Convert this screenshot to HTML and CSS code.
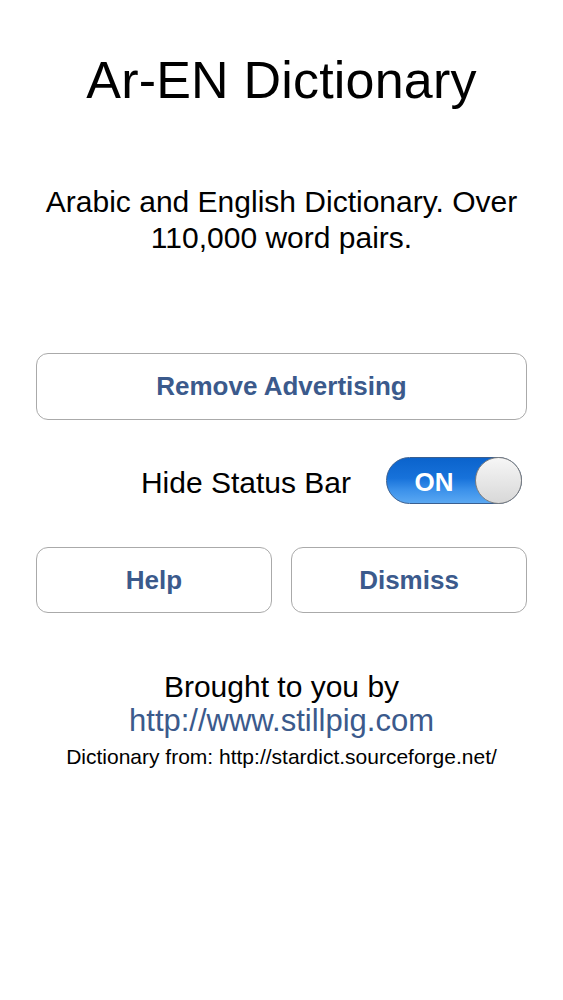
FILE: index.html
```html
<!DOCTYPE html>
<html lang="en">
<head>
<meta charset="utf-8">
<title>Ar-EN Dictionary</title>
<link rel="stylesheet" href="styles.css">
</head>
<body>
<div class="screen">
  <h1 class="title">Ar-EN Dictionary</h1>
  <p class="desc">Arabic and English Dictionary. Over 110,000 word pairs.</p>
  <button class="btn btn-wide" type="button">Remove Advertising</button>
  <div class="toggle-row">
    <span class="toggle-label">Hide Status Bar</span>
    <div class="switch">
      <span class="switch-text">ON</span>
      <span class="knob"></span>
    </div>
  </div>
  <div class="btn-pair">
    <button class="btn" type="button">Help</button>
    <button class="btn" type="button">Dismiss</button>
  </div>
  <div class="footer">
    <div class="brought">Brought to you by</div>
    <div class="link">http://www.stillpig.com</div>
    <div class="source">Dictionary from: http://stardict.sourceforge.net/</div>
  </div>
</div>
</body>
</html>
```

FILE: styles.css
```css
html, body {
  margin: 0;
  padding: 0;
  background: #ffffff;
}
body {
  font-family: "Liberation Sans", Arial, sans-serif;
  color: #000;
}
.screen {
  width: 563px;
  box-sizing: border-box;
  padding: 0 36px;
  display: flex;
  flex-direction: column;
}
.title {
  margin: 50px 0 0;
  font-size: 52px;
  font-weight: normal;
  line-height: 60px;
  text-align: center;
  letter-spacing: 0.2px;
}
.desc {
  margin: 74px 0 0;
  font-size: 30px;
  line-height: 36px;
  text-align: center;
}
.btn {
  font-family: "Liberation Sans", Arial, sans-serif;
  font-size: 26px;
  font-weight: bold;
  color: #3b5a8c;
  background: #fff;
  border: 1.5px solid #aaaaaa;
  border-radius: 12px;
  height: 66px;
  padding: 0;
  margin: 0;
}
.btn-wide {
  margin-top: 97px;
  height: 67px;
  width: 100%;
}
.toggle-row {
  margin-top: 37px;
  height: 47px;
  display: flex;
  align-items: center;
  justify-content: flex-end;
  gap: 35px;
  padding-right: 5px;
}
.toggle-label {
  font-size: 30px;
  padding-top: 4px;
}
.switch {
  position: relative;
  width: 136px;
  height: 47px;
  box-sizing: border-box;
  border-radius: 24px;
  border: 1px solid #3a5f90;
  background: linear-gradient(to bottom, #0b63cc 0%, #1772da 45%, #3a90ea 70%, #5aa8f2 100%);
  display: flex;
  align-items: center;
}
.switch-text {
  width: 94px;
  padding-top: 3px;
  text-align: center;
  color: #fff;
  font-size: 26px;
  font-weight: bold;
}
.knob {
  position: absolute;
  right: -1px;
  top: -1px;
  width: 47px;
  height: 47px;
  box-sizing: border-box;
  border-radius: 50%;
  border: 1.5px solid #7e7e7e;
  background: linear-gradient(to bottom, #f6f6f6 0%, #d8d8d8 100%);
}
.btn-pair {
  margin-top: 43px;
  display: grid;
  grid-template-columns: 1fr 1fr;
  gap: 19px;
}
.footer {
  margin-top: 57px;
  text-align: center;
}
.brought {
  font-size: 30px;
  line-height: 34px;
}
.link {
  font-size: 31px;
  line-height: 33px;
  color: #3b5a8c;
}
.source {
  margin-top: 2px;
  font-size: 21px;
  line-height: 36px;
}
```
